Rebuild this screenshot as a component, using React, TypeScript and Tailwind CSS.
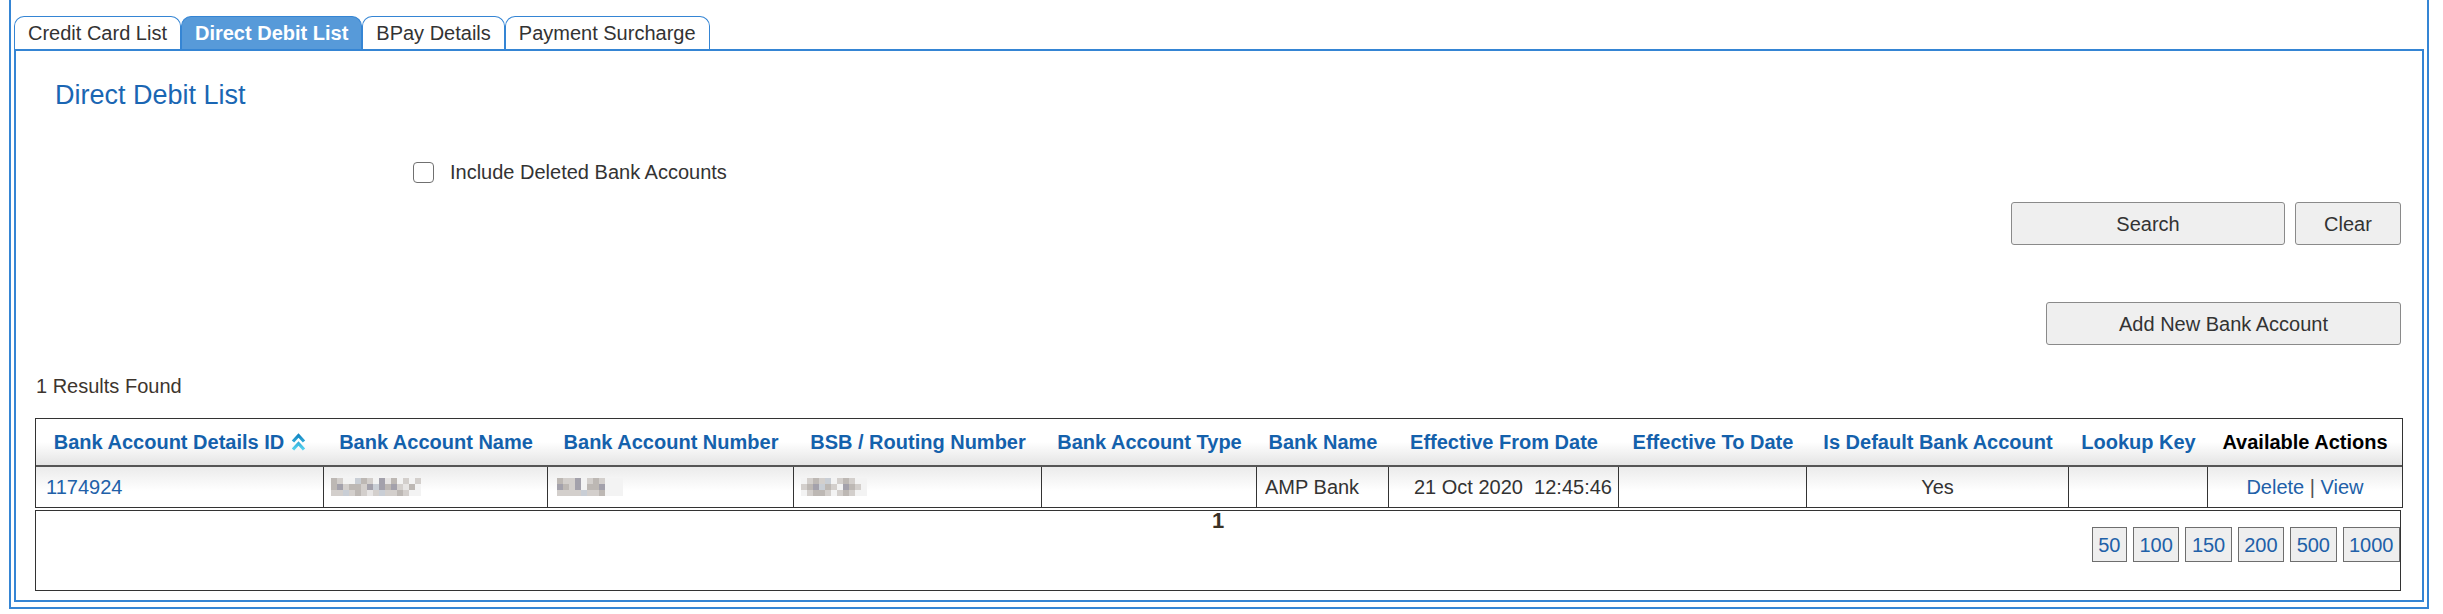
import React from 'react';

const tones = [
  'bg-[#e7e5e4]',
  'bg-[#d3cfcc]',
  'bg-[#bdb8b4]',
  'bg-[#a3a1ab]',
  'bg-[#c9ced5]',
  'bg-[#f3f3f3]',
];

// pixelated (redacted) cell content
function Mosaic({ pattern }: { pattern: string[] }) {
  return (
    <div className="flex flex-col">
      {pattern.map((row, r) => (
        <div key={r} className="flex">
          {row.split('').map((c, i) => (
            <span key={i} className={`block h-[6px] w-[6px] ${tones[Number(c)]}`} />
          ))}
        </div>
      ))}
    </div>
  );
}

function SortIcon() {
  return (
    <svg width="15" height="22" viewBox="0 0 15 22" className="ml-[7px] inline-block align-[-4px]">
      <defs>
        <linearGradient id="sortGrad" x1="0" y1="0" x2="0" y2="1">
          <stop offset="0" stopColor="#1488c4" />
          <stop offset="1" stopColor="#55d3f0" />
        </linearGradient>
      </defs>
      <path
        d="M2 10.5 L7.5 4.5 L13 10.5 M2 18.5 L7.5 12.5 L13 18.5"
        fill="none"
        stroke="url(#sortGrad)"
        strokeWidth="3.2"
      />
    </svg>
  );
}

const tabs = ['Credit Card List', 'Direct Debit List', 'BPay Details', 'Payment Surcharge'];

const columns = [
  { label: 'Bank Account Details ID', width: 288, sort: true },
  { label: 'Bank Account Name', width: 224 },
  { label: 'Bank Account Number', width: 246 },
  { label: 'BSB / Routing Number', width: 248 },
  { label: 'Bank Account Type', width: 215 },
  { label: 'Bank Name', width: 132 },
  { label: 'Effective From Date', width: 230 },
  { label: 'Effective To Date', width: 188 },
  { label: 'Is Default Bank Account', width: 262 },
  { label: 'Lookup Key', width: 139 },
  { label: 'Available Actions', width: 194, plain: true },
];

const pageSizes = ['50', '100', '150', '200', '500', '1000'];

export default function App() {
  const cell = 'h-[40px] border-r border-[#333] p-0 align-middle';

  return (
    <div className="min-h-[614px] bg-white font-['Liberation_Sans',Arial,sans-serif] text-[20px] text-[#333]">
      <div className="ml-[9px] w-[2420px] border-x-2 border-b-2 border-[#3585d4] px-[3px] pb-[5px] pt-[16px]">
        {/* tabs */}
        <div className="flex items-end">
          {tabs.map((t) => {
            const active = t === 'Direct Debit List';
            return (
              <div
                key={t}
                className={
                  active
                    ? 'h-[33px] rounded-t-[10px] border border-b-0 border-[#3585d4] bg-[#579ad9] px-[13px] font-bold leading-[32px] text-white'
                    : 'h-[33px] rounded-t-[10px] border border-b-0 border-[#3585d4] bg-white px-[13px] leading-[32px] text-[#333]'
                }
              >
                {t}
              </div>
            );
          })}
        </div>

        {/* panel */}
        <div className="border-2 border-[#3585d4] pb-[9px] pl-[19px] pr-[21px] pt-[29px]">
          <h2 className="ml-[20px] text-[27px] leading-[31px] text-[#1a66b3]">Direct Debit List</h2>

          <label className="ml-[378px] mt-[50px] flex h-[23px] items-center gap-[16px] leading-[23px]">
            <span className="block h-[21px] w-[21px] rounded-[4px] border-[1.5px] border-[#707070] bg-white" />
            Include Deleted Bank Accounts
          </label>

          <div className="mt-[18px] flex justify-end gap-[10px]">
            <button className="h-[43px] w-[274px] rounded-[3px] border border-[#8a8a8a] bg-[#efefef] text-[#333]">
              Search
            </button>
            <button className="h-[43px] w-[106px] rounded-[3px] border border-[#8a8a8a] bg-[#efefef] text-[#333]">
              Clear
            </button>
          </div>

          <div className="mt-[57px] flex justify-end">
            <button className="h-[43px] w-[355px] rounded-[3px] border border-[#8a8a8a] bg-[#efefef] text-[#333]">
              Add New Bank Account
            </button>
          </div>

          <div className="ml-[1px] mt-[30px] leading-[23px] text-[#3d352e]">1 Results Found</div>

          <table className="mt-[20px] w-[2366px] table-fixed border-separate border-spacing-0 border border-[#333]">
            <colgroup>
              {columns.map((c) => (
                <col key={c.label} style={{ width: c.width }} />
              ))}
            </colgroup>
            <thead>
              <tr>
                {columns.map((c) => (
                  <th
                    key={c.label}
                    className={
                      c.plain
                        ? 'h-[48px] whitespace-nowrap border-b-2 border-[#555] bg-gradient-to-b from-white from-50% to-[#e4e4e4] p-0 text-center font-bold text-black'
                        : 'h-[48px] whitespace-nowrap border-b-2 border-[#555] bg-gradient-to-b from-white from-50% to-[#e4e4e4] p-0 text-center font-bold text-[#1461ac]'
                    }
                  >
                    {c.label}
                    {c.sort && <SortIcon />}
                  </th>
                ))}
              </tr>
            </thead>
            <tbody>
              <tr className="bg-gradient-to-b from-[#ebebeb] to-white to-60%">
                <td className={`${cell} pl-[10px] text-[#2160a8]`}>1174924</td>
                <td className={`${cell} pl-[7px]`}>
                  <Mosaic pattern={['215542153025151', '231221343231025', '114121014112155']} />
                </td>
                <td className={`${cell} pl-[9px]`}>
                  <Mosaic pattern={['21135121555', '32135223555', '11114112555']} />
                </td>
                <td className={`${cell} pl-[7px]`}>
                  <Mosaic pattern={['51214512155', '12342153215', '51221512155']} />
                </td>
                <td className={cell}></td>
                <td className={`${cell} whitespace-nowrap pl-[8px]`}>AMP Bank</td>
                <td className={`${cell} whitespace-nowrap pl-[25px]`}>21 Oct 2020{'\u00a0'} 12:45:46</td>
                <td className={cell}></td>
                <td className={`${cell} text-center`}>Yes</td>
                <td className={cell}></td>
                <td className="h-[40px] p-0 text-center align-middle">
                  <span className="text-[#2160a8]">Delete</span> <span className="text-[#555]">|</span>{' '}
                  <span className="text-[#2160a8]">View</span>
                </td>
              </tr>
            </tbody>
          </table>

          {/* pager */}
          <div className="mt-[2px] flex h-[81px] w-[2366px] flex-col border border-[#333] pt-[2px]">
            <div className="h-[14px] text-center text-[22px] font-bold leading-[16px] text-[#3a3226]">1</div>
            <div className="flex justify-end gap-[6px]">
              {pageSizes.map((s) => (
                <span
                  key={s}
                  className="flex h-[35px] items-center border border-[#6e6e6e] bg-[#eeeeee] px-[5.5px] text-[#2160a8]"
                >
                  {s}
                </span>
              ))}
            </div>
          </div>
        </div>
      </div>
    </div>
  );
}
